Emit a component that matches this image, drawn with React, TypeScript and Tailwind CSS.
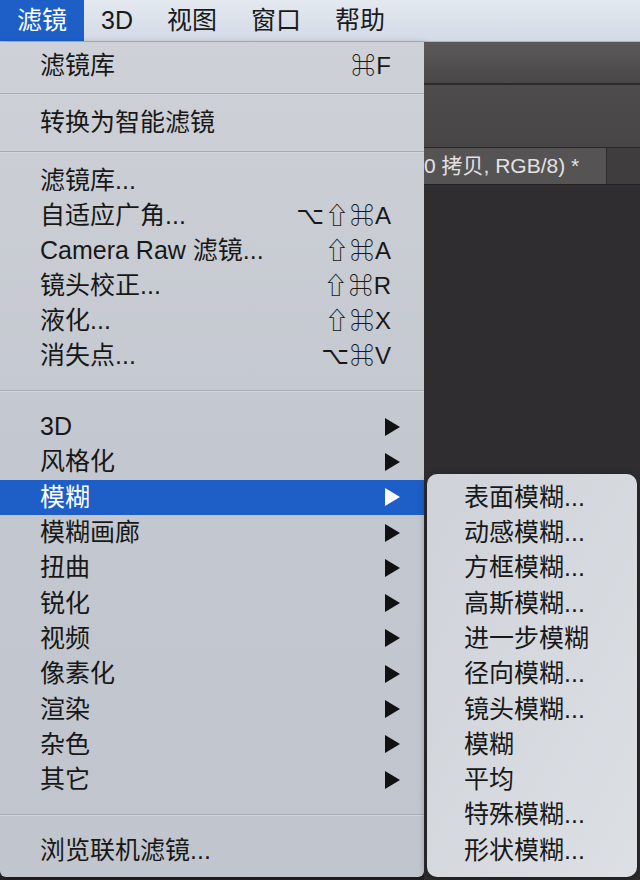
import React from "react";

const cjk = "font-['Liberation_Sans','Noto_Sans_CJK_SC','DejaVu_Sans',sans-serif]";

type Item = { label: string; key?: string; sub?: boolean; active?: boolean };

const groupTop: Item[] = [{ label: "滤镜库", key: "⌘F" }];
const groupSmart: Item[] = [{ label: "转换为智能滤镜" }];
const groupFilters: Item[] = [
  { label: "滤镜库..." },
  { label: "自适应广角...", key: "⌥⇧⌘A" },
  { label: "Camera Raw 滤镜...", key: "⇧⌘A" },
  { label: "镜头校正...", key: "⇧⌘R" },
  { label: "液化...", key: "⇧⌘X" },
  { label: "消失点...", key: "⌥⌘V" },
];
const groupSubs: Item[] = [
  { label: "3D", sub: true },
  { label: "风格化", sub: true },
  { label: "模糊", sub: true, active: true },
  { label: "模糊画廊", sub: true },
  { label: "扭曲", sub: true },
  { label: "锐化", sub: true },
  { label: "视频", sub: true },
  { label: "像素化", sub: true },
  { label: "渲染", sub: true },
  { label: "杂色", sub: true },
  { label: "其它", sub: true },
];

const blurItems = [
  "表面模糊...",
  "动感模糊...",
  "方框模糊...",
  "高斯模糊...",
  "进一步模糊",
  "径向模糊...",
  "镜头模糊...",
  "模糊",
  "平均",
  "特殊模糊...",
  "形状模糊...",
];

function Arrow({ white }: { white?: boolean }) {
  return (
    <svg width="15" height="18" viewBox="0 0 15 18">
      <polygon points="0,0 15,9 0,18" fill={white ? "#ffffff" : "#111111"} />
    </svg>
  );
}

function Row({ item, tall }: { item: Item; tall?: boolean }) {
  return (
    <div
      className={`flex items-center justify-between pl-[40px] ${tall ? "h-[35.3px]" : "h-[35px]"} ${
        item.sub ? "pr-[24px]" : "pr-[32px]"
      } ${item.active ? "bg-[#1d5fc7] text-white" : "text-[#181818]"}`}
    >
      <span className="text-[25px] leading-none">{item.label}</span>
      {item.key && <span className="text-[24px] leading-none tracking-[1px]">{item.key}</span>}
      {item.sub && <Arrow white={item.active} />}
    </div>
  );
}

function Separator({ space }: { space: string }) {
  return (
    <div className={space}>
      <div className="h-[1px] bg-[#a9adb5]" />
      <div className="h-[1px] bg-[#d2d5db]" />
    </div>
  );
}

export default function App() {
  const menus = ["3D", "视图", "窗口", "帮助"];

  return (
    <div className={`w-[640px] h-[880px] overflow-hidden flex flex-col bg-[#262426] ${cjk}`}>
      {/* menu bar */}
      <div className="h-[42px] flex bg-linear-to-b from-[#e4e9f0] to-[#d3dae6] border-b border-[#aeb7c6]">
        <div className="px-[17px] flex items-center bg-[#1d5fc7] text-white text-[25px]">滤镜</div>
        {menus.map((m) => (
          <div key={m} className="px-[17px] flex items-center text-[#1a1a1a] text-[25px]">
            {m}
          </div>
        ))}
      </div>

      <div className="relative flex flex-1">
        {/* filter menu */}
        <div className="w-[424px] h-[835px] flex flex-col rounded-b-[6px] bg-linear-to-b from-[#ced1d7] via-[#c3c7cf] to-[#c1c5cd] shadow-[2px_2px_6px_rgba(0,0,0,0.4)]">
          <div className="pt-[6px]">
            {groupTop.map((i) => (
              <Row key={i.label} item={i} />
            ))}
          </div>
          <Separator space="pt-[10px] pb-[10px]" />
          {groupSmart.map((i) => (
            <Row key={i.label} item={i} />
          ))}
          <Separator space="pt-[11px] pb-[10px]" />
          {groupFilters.map((i) => (
            <Row key={i.label} item={i} />
          ))}
          <Separator space="pt-[17px] pb-[17px]" />
          {groupSubs.map((i) => (
            <Row key={i.label} item={i} tall />
          ))}
          <Separator space="pt-[17px] pb-[17px]" />
          <Row item={{ label: "浏览联机滤镜..." }} tall />
        </div>

        {/* photoshop window chrome */}
        <div className="flex-1 flex flex-col">
          <div className="h-[41px] bg-linear-to-b from-[#5c595a] to-[#4a4748]" />
          <div className="h-[2px] bg-[#2c2a2b]" />
          <div className="h-[62px] bg-linear-to-b from-[#4e4b4c] to-[#484546]" />
          <div className="h-[1px] bg-[#2a2829]" />
          <div className="h-[36px] flex bg-[#3f3d3e]">
            <div className="w-[183px] flex items-center bg-[#555354] border-r border-[#2e2c2d]">
              <span className="whitespace-nowrap text-[21px] text-[#e2e2e2]">0 拷贝, RGB/8) *</span>
            </div>
          </div>
          <div className="h-[1px] bg-[#252325]" />
          <div className="flex-1 bg-[#2f2d30]" />
        </div>

        {/* blur submenu */}
        <div className="absolute left-[427px] top-[432px] w-[210px] h-[403px] pt-[5.6px] rounded-[10px] bg-linear-to-br from-[#cfd2d8] to-[#dcdfe4] shadow-[0_2px_8px_rgba(0,0,0,0.45)]">
          {blurItems.map((b) => (
            <div key={b} className="h-[35.3px] flex items-center pl-[37px] text-[25px] leading-none text-[#181818]">
              {b}
            </div>
          ))}
        </div>
      </div>
    </div>
  );
}
